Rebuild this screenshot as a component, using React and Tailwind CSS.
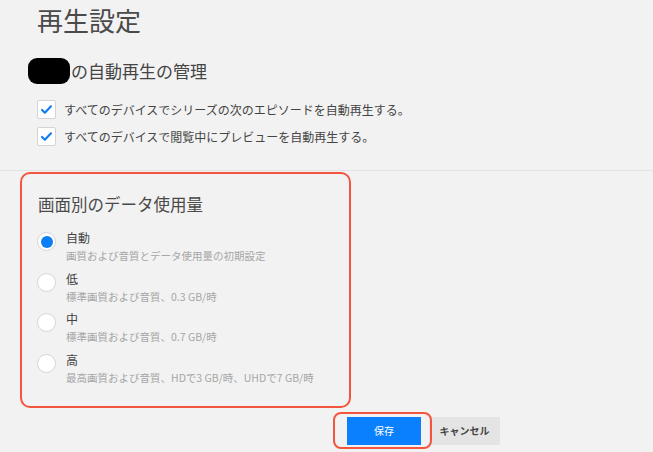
import React from 'react';

const FONT = { fontFamily: '"Noto Sans CJK JP", "Noto Sans", sans-serif' };

const autoplay = [
  'すべてのデバイスでシリーズの次のエピソードを自動再生する。',
  'すべてのデバイスで閲覧中にプレビューを自動再生する。',
];

const plans = [
  { label: '自動', note: '画質および音質とデータ使用量の初期設定', checked: true },
  { label: '低', note: '標準画質および音質、0.3 GB/時' },
  { label: '中', note: '標準画質および音質、0.7 GB/時' },
  { label: '高', note: '最高画質および音質、HDで3 GB/時、UHDで7 GB/時' },
];

function Check() {
  return (
    <div className="w-[19px] h-[19px] bg-white border border-[#d4d4d4] rounded-[2px] flex items-center justify-center shrink-0">
      <svg viewBox="0 0 16 16" className="w-[13px] h-[13px]">
        <path d="M2.5 8.5l3.5 3.5 7.5-8" fill="none" stroke="#0b7cf2" strokeWidth="2.6" strokeLinecap="round" strokeLinejoin="round" />
      </svg>
    </div>
  );
}

function Radio({ checked }) {
  return (
    <div className="w-[19px] h-[19px] rounded-full bg-white border border-[#d6d6d6] flex items-center justify-center shrink-0">
      {checked && <div className="w-[12px] h-[12px] rounded-full bg-[#0a7ef5]" />}
    </div>
  );
}

export default function App() {
  return (
    <div className="w-[653px] h-[452px] bg-[#f2f2f2] overflow-hidden" style={FONT}>
      <h1 className="pl-[37px] pt-[3px] text-[26px] leading-[34px] text-[#4a4a4a]">再生設定</h1>

      <div className="flex items-center mt-[21px] pl-[28px]">
        <div className="w-[42px] h-[26px] bg-black rounded-[9px]" />
        <span className="ml-[1px] text-[17px] leading-[26px] text-[#444]">の自動再生の管理</span>
      </div>

      <div className="mt-[16px] pl-[37px] flex flex-col gap-[8px]">
        {autoplay.map((t) => (
          <div key={t} className="flex items-center gap-[8px]">
            <Check />
            <span className="text-[12px] text-[#444]">{t}</span>
          </div>
        ))}
      </div>

      <div className="mt-[24px] border-t border-[#e3e3e3]" />

      <div className="ml-[20px] mt-[1px] w-[331px] h-[236px] border-2 border-[#f4553f] rounded-[10px] pl-[16px] pt-[18px]">
        <h2 className="text-[16.5px] leading-[24px] text-[#4a4a4a]">画面別のデータ使用量</h2>
        <div className="mt-[13px] flex flex-col">
          {plans.map((p) => (
            <div key={p.label} className="flex h-[40.7px]">
              <div className="-ml-[1px] mt-[3px]">
                <Radio checked={p.checked} />
              </div>
              <div className="ml-[10px] flex flex-col">
                <span className="text-[12px] leading-[18px] text-[#444]">{p.label}</span>
                <span className="text-[10.5px] leading-[18px] text-[#a6a6a6]">{p.note}</span>
              </div>
            </div>
          ))}
        </div>
      </div>

      <div className="flex items-center mt-[4px] pl-[333px]">
        <div className="relative z-10 w-[99px] h-[37px] border-2 border-[#f4553f] rounded-[8px] flex items-center pl-[12px]">
          <button className="w-[74px] h-[28px] bg-[#0a80ff] text-white text-[10px]">保存</button>
        </div>
        <button className="-ml-[3px] w-[71px] h-[28px] bg-[#e4e4e4] text-[10px] text-[#444] font-bold">キャンセル</button>
      </div>
    </div>
  );
}
